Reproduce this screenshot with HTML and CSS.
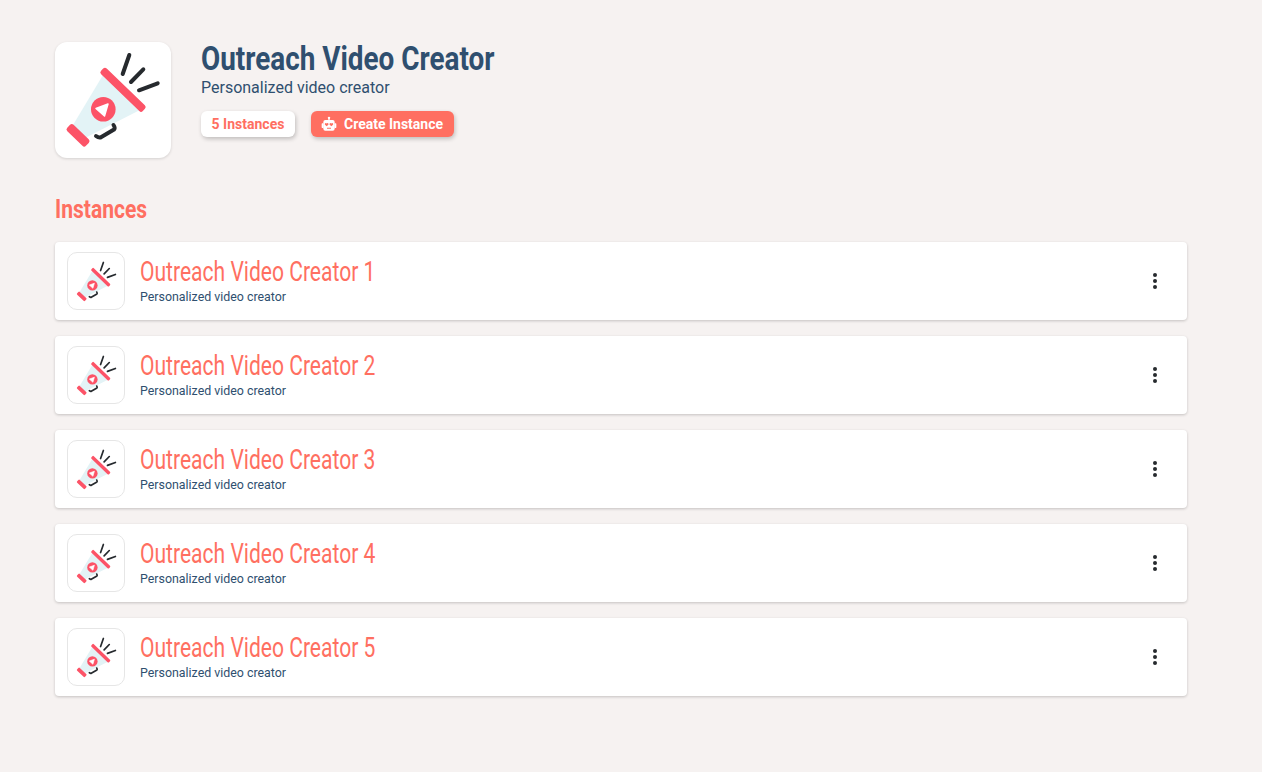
FILE: index.html
```html
<!DOCTYPE html>
<html lang="en">
<head>
<meta charset="utf-8">
<title>Outreach Video Creator</title>
<link rel="stylesheet" href="styles.css">
</head>
<body>
<svg class="defs" width="0" height="0" aria-hidden="true">
  <symbol id="megaphone" viewBox="0 0 116 116">
    <polygon points="48,33 85,68 30,96 18,83" fill="#e3f3f6"/>
    <rect x="39" y="43.8" width="58" height="8" rx="2.5" transform="rotate(44 68 47.8)" fill="#fc5367"/>
    <rect x="10" y="88.8" width="26" height="9" rx="2.5" transform="rotate(44 23 93.3)" fill="#fc5367"/>
    <circle cx="48.3" cy="67.3" r="12.3" fill="#fc5367"/>
    <path d="M41 66.5 L53 62 L49.5 74 Z" fill="#fff" stroke="#fff" stroke-width="1.5" stroke-linejoin="round"/>
    <g fill="none" stroke="#262a2e" stroke-width="4" stroke-linecap="round" stroke-linejoin="round">
      <line x1="74.3" y1="13" x2="67.7" y2="32"/>
      <line x1="88.3" y1="27.3" x2="76" y2="40"/>
      <line x1="102.7" y1="41.3" x2="84" y2="48.3"/>
      <path d="M58.5 83 Q60.5 86 59 87.5 L45.5 95.5 Q43.5 96 41 94"/>
    </g>
  </symbol>
</svg>
<main class="page">
  <header class="hero">
    <div class="hero-logo"><svg class="hero-icon"><use href="#megaphone"/></svg></div>
    <div class="hero-text">
      <h1 class="hero-title"><span class="squeeze">Outreach Video Creator</span></h1>
      <p class="hero-sub">Personalized video creator</p>
      <div class="hero-actions">
        <span class="pill">5 Instances</span>
        <button class="create" type="button">
          <svg class="robot" viewBox="0 0 24 24">
            <path fill="#fff" d="M11 1.5h2v5h-2z"/>
            <circle fill="#fff" cx="12" cy="2.8" r="1.8"/>
            <rect fill="#fff" x="3.5" y="6" width="17" height="16" rx="3"/>
            <rect fill="#fff" x="1" y="11" width="3" height="7" rx="1"/>
            <rect fill="#fff" x="20" y="11" width="3" height="7" rx="1"/>
            <path fill="#ff6f61" d="M8.5 15.5L6 13A1.5 1.5 0 0 1 8.5 11.2A1.5 1.5 0 0 1 11 13ZM15.5 15.5L13 13A1.5 1.5 0 0 1 15.5 11.2A1.5 1.5 0 0 1 18 13ZM9 17.5h6v1.6H9z"/>
          </svg>
          <span>Create Instance</span>
        </button>
      </div>
    </div>
  </header>
  <h2 class="section-title"><span class="squeeze">Instances</span></h2>
  <ul class="list">
    <li class="card">
      <div class="card-logo"><svg class="card-icon"><use href="#megaphone"/></svg></div>
      <div class="card-text"><div class="card-title"><span class="squeeze">Outreach Video Creator 1</span></div><div class="card-sub">Personalized video creator</div></div>
      <svg class="more" viewBox="0 0 24 24"><circle cx="12" cy="6" r="2"/><circle cx="12" cy="12" r="2"/><circle cx="12" cy="18" r="2"/></svg>
    </li>
    <li class="card">
      <div class="card-logo"><svg class="card-icon"><use href="#megaphone"/></svg></div>
      <div class="card-text"><div class="card-title"><span class="squeeze">Outreach Video Creator 2</span></div><div class="card-sub">Personalized video creator</div></div>
      <svg class="more" viewBox="0 0 24 24"><circle cx="12" cy="6" r="2"/><circle cx="12" cy="12" r="2"/><circle cx="12" cy="18" r="2"/></svg>
    </li>
    <li class="card">
      <div class="card-logo"><svg class="card-icon"><use href="#megaphone"/></svg></div>
      <div class="card-text"><div class="card-title"><span class="squeeze">Outreach Video Creator 3</span></div><div class="card-sub">Personalized video creator</div></div>
      <svg class="more" viewBox="0 0 24 24"><circle cx="12" cy="6" r="2"/><circle cx="12" cy="12" r="2"/><circle cx="12" cy="18" r="2"/></svg>
    </li>
    <li class="card">
      <div class="card-logo"><svg class="card-icon"><use href="#megaphone"/></svg></div>
      <div class="card-text"><div class="card-title"><span class="squeeze">Outreach Video Creator 4</span></div><div class="card-sub">Personalized video creator</div></div>
      <svg class="more" viewBox="0 0 24 24"><circle cx="12" cy="6" r="2"/><circle cx="12" cy="12" r="2"/><circle cx="12" cy="18" r="2"/></svg>
    </li>
    <li class="card">
      <div class="card-logo"><svg class="card-icon"><use href="#megaphone"/></svg></div>
      <div class="card-text"><div class="card-title"><span class="squeeze">Outreach Video Creator 5</span></div><div class="card-sub">Personalized video creator</div></div>
      <svg class="more" viewBox="0 0 24 24"><circle cx="12" cy="6" r="2"/><circle cx="12" cy="12" r="2"/><circle cx="12" cy="18" r="2"/></svg>
    </li>
  </ul>
</main>
</body>
</html>
```
FILE: styles.css
```css
* { box-sizing: border-box; }
html, body { margin: 0; padding: 0; height: 100%; }
body { background: #f6f2f1; font-family: Roboto, "Liberation Sans", sans-serif; color: #2f4f6f; overflow: hidden; }
.defs { position: absolute; }
.page { padding: 42px 75px 0 55px; }
.hero { display: flex; gap: 30px; height: 116px; }
.hero-logo { width: 116px; height: 116px; background: #fff; border-radius: 12px; box-shadow: 0 1px 3px rgba(0,0,0,.14); flex: none; }
.hero-icon { display: block; width: 116px; height: 116px; }
.hero-text { display: flex; flex-direction: column; align-items: flex-start; }
.squeeze { display: inline-block; white-space: nowrap; transform-origin: 0 50%; }
.hero-title { margin: 0; font-size: 34px; line-height: 32px; font-weight: 700; color: #2f4f6f; }
.hero-title .squeeze { transform: scaleX(.82); }
.hero-sub { margin: 4px 0 0; font-size: 16px; line-height: 19px; }
.hero-actions { display: flex; gap: 16px; margin-top: 14px; }
.pill, .create { height: 26px; border-radius: 6px; font-family: Roboto, sans-serif; font-size: 14px; font-weight: 700; display: flex; align-items: center; box-shadow: 1px 2px 4px rgba(0,0,0,.22); border: 0; }
.pill { width: 94px; justify-content: center; background: #fff; color: #ff6f61; }
.create { width: 143px; padding: 0 0 0 10px; gap: 7px; background: #ff6f61; color: #fff; }
.robot { width: 16px; height: 16px; flex: none; }
.section-title { margin: 37px 0 0; font-size: 26px; line-height: 28px; font-weight: 700; color: #ff6f61; }
.section-title .squeeze { transform: scaleX(.81); }
.list { list-style: none; margin: 19px 0 0; padding: 0; display: flex; flex-direction: column; gap: 16px; }
.card { height: 78px; background: #fff; border-radius: 4px; box-shadow: 0 1px 3px rgba(0,0,0,.2); display: flex; align-items: center; padding: 0 20px 0 12px; }
.card-logo { width: 58px; height: 58px; border: 1px solid #e6e6e6; border-radius: 10px; display: flex; align-items: center; justify-content: center; flex: none; }
.card-icon { display: block; width: 49px; height: 49px; }
.card-text { margin-left: 15px; flex: 1; padding-bottom: 2px; }
.card-title { font-size: 27px; line-height: 30px; color: #ff6f61; }
.card-title .squeeze { transform: scaleX(.78); }
.card-sub { font-size: 12.4px; line-height: 15px; margin-top: 2px; }
.more { width: 24px; height: 24px; fill: #262a2e; flex: none; }
```
